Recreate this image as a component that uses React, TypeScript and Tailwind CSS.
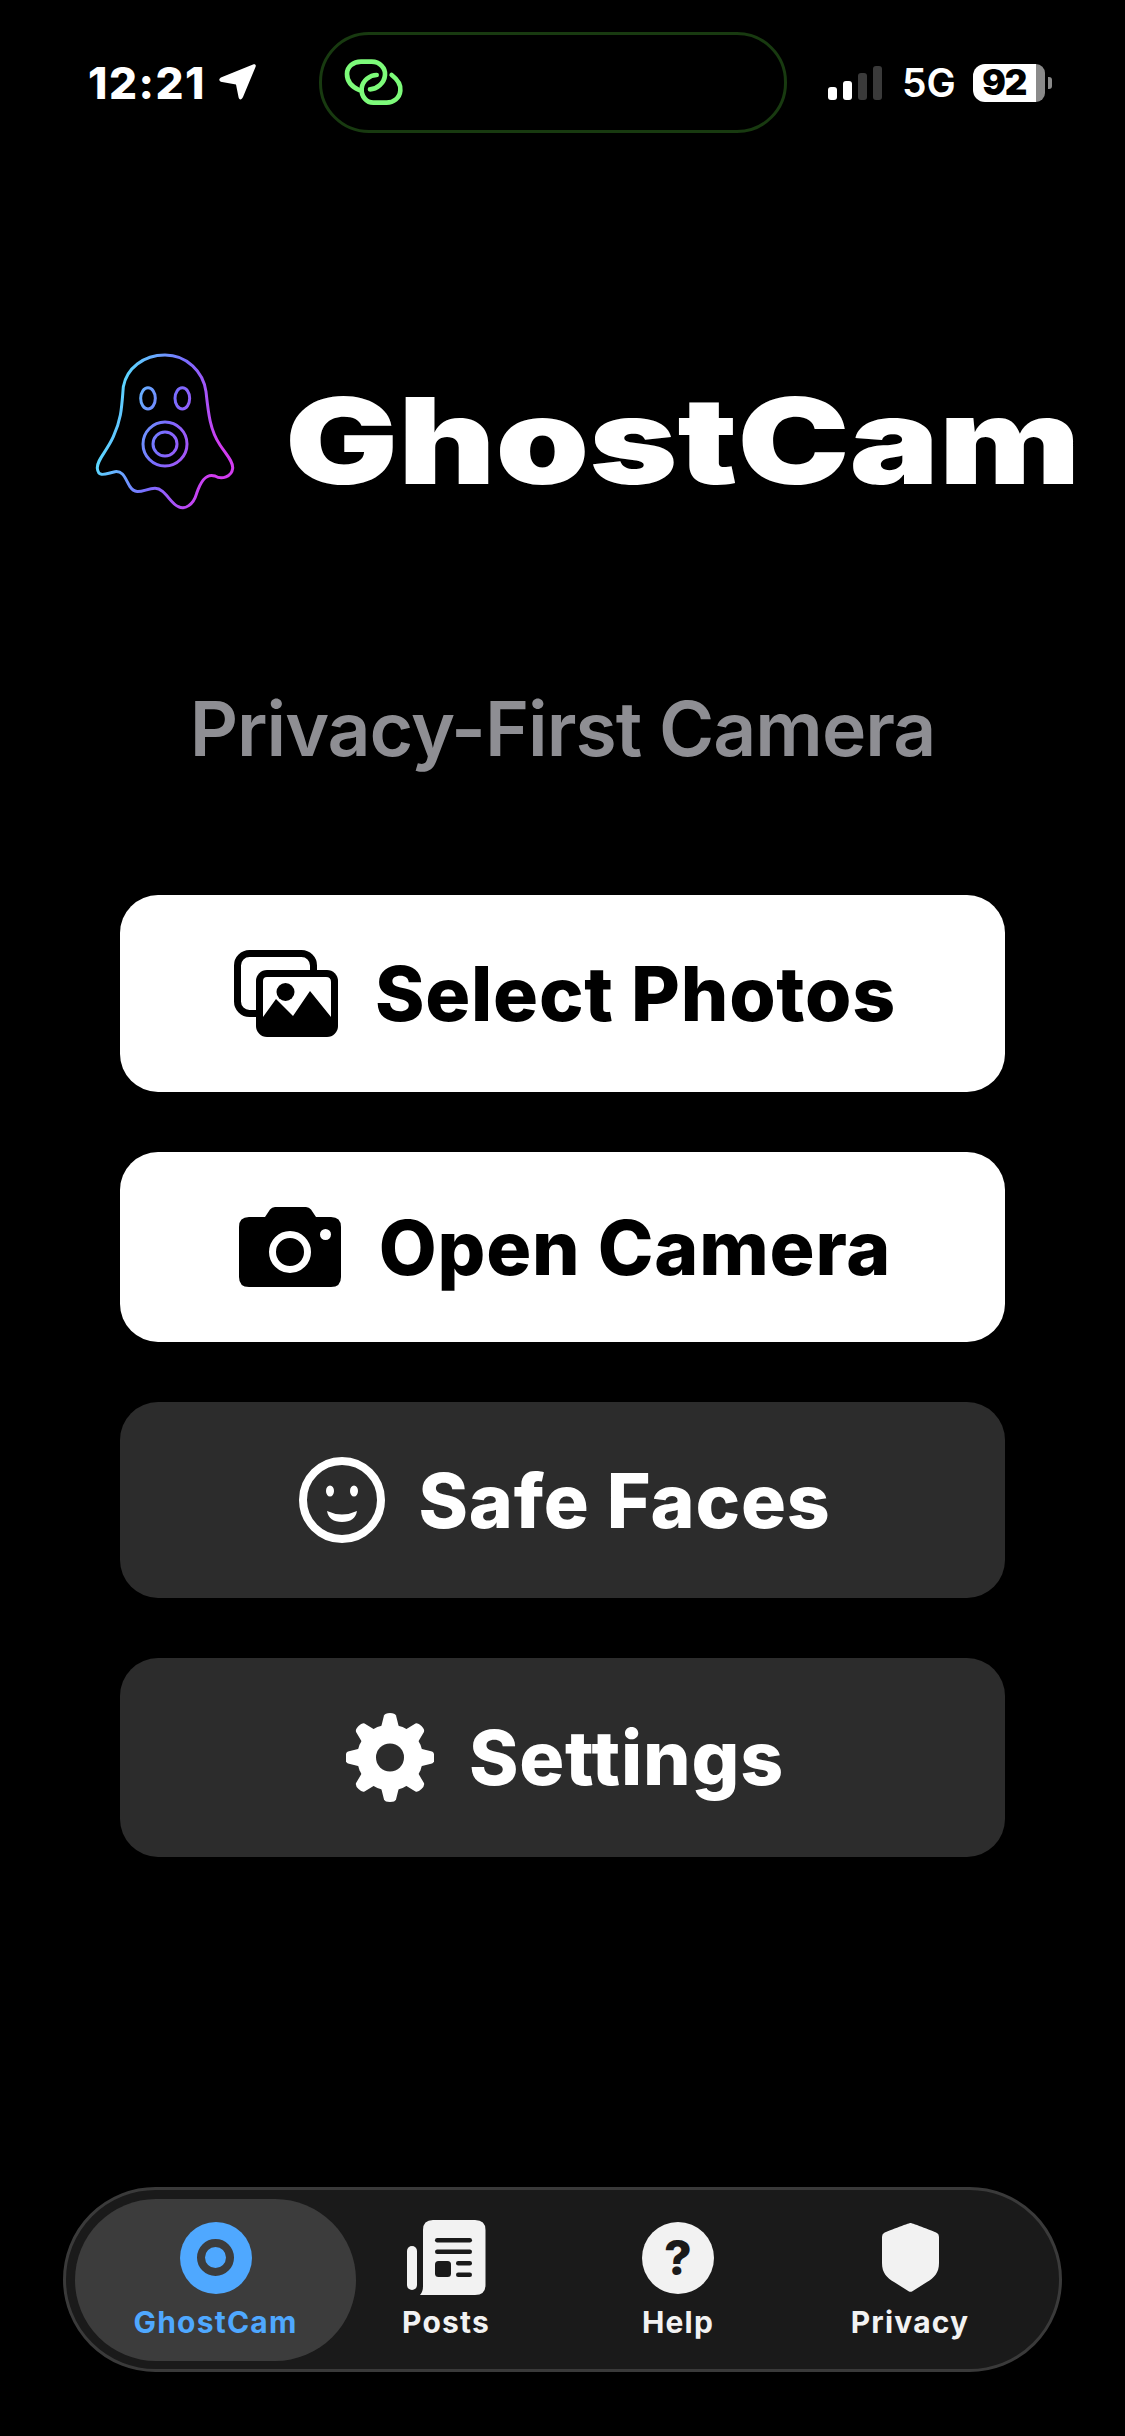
const GEAR_ANGLES = [0, 45, 90, 135, 180, 225, 270, 315];

function LinkIcon() {
  return (
    <svg className="ml-[13px] w-[75px] h-[65px]" viewBox="0 0 225 195" fill="none" stroke="#7dfb7a" strokeWidth="14" strokeLinecap="round">
      <path d="M72 120C50 110 36 95 36 72C36 50 55 35 78 35H110C135 35 152 55 150 75C148 100 125 118 105 118" />
      <path d="M170 75C190 90 198 105 196 122C194 145 175 158 155 158H115C95 158 78 140 80 115C82 92 105 75 125 75" />
    </svg>
  );
}

function StatusBar() {
  return (
    <div className="flex items-center pt-[32px]">
      <div className="w-[319px] pl-[88px] flex items-center gap-[13px]">
        <span className="text-[44px] leading-none font-extrabold text-white tracking-[1.5px]">12:21</span>
        <svg className="w-[37px] h-[37px] -mt-[2px]" viewBox="0 0 37 37">
          <path d="M34 1.500C36 .5 37.500 2 36.500 4L24 34C22.500 37.500 20 37 19.500 34L17 21.500L3 19C-.5 18.200 -.5 15.500 2.500 14.200Z" fill="white" />
        </svg>
      </div>
      <div className="w-[468px] h-[101px] rounded-[50px] border-[3px] border-[#183a10] flex items-center">
        <LinkIcon />
      </div>
      <div className="flex items-center pl-[41px]">
        <div className="flex items-end gap-[6px] h-[34px]">
          <div className="w-[9px] h-[13px] rounded-[3px] bg-white" />
          <div className="w-[9px] h-[19px] rounded-[3px] bg-white" />
          <div className="w-[9px] h-[27px] rounded-[3px] bg-[#3a3a3a]" />
          <div className="w-[9px] h-[34px] rounded-[3px] bg-[#3a3a3a]" />
        </div>
        <span className="ml-[20px] text-[39px] leading-none font-semibold text-white">5G</span>
        <div className="ml-[17px] w-[72px] h-[38px] flex">
          <div className="w-[63px] h-full rounded-l-[12px] bg-white flex items-center justify-center text-[35px] leading-none font-black tracking-[-1px] text-black">92</div>
          <div className="flex-1 rounded-r-[12px] bg-[#8a8a8a]" />
        </div>
        <div className="ml-[3px] w-[4px] h-[12px] rounded-r-[3px] bg-[#8a8a8a]" />
      </div>
    </div>
  );
}

function GhostLogo() {
  return (
    <svg className="w-[142px] h-[160px] shrink-0 -ml-[2px]" viewBox="42 36 426 480" fill="none" stroke="url(#ghostGrad)" strokeWidth="9">
      <defs>
        <linearGradient id="ghostGrad" gradientUnits="userSpaceOnUse" x1="90" y1="220" x2="420" y2="320">
          <stop offset="0" stopColor="#5adcff" />
          <stop offset="0.5" stopColor="#7a6cff" />
          <stop offset="1" stopColor="#d23cf0" />
        </linearGradient>
      </defs>
      <path d="M255 45C320 45 370 95 378 155C385 220 390 270 420 315C440 345 460 365 458 385C455 410 425 420 405 408C375 398 360 430 350 460C340 495 315 510 295 500C270 490 255 445 225 445C195 445 170 470 150 440C135 415 130 392 105 395C80 400 55 415 52 385C50 360 80 335 100 290C125 235 125 200 130 140C140 85 190 45 255 45Z" />
      <ellipse cx="204" cy="175" rx="22" ry="32" />
      <ellipse cx="307" cy="175" rx="22" ry="32" />
      <circle cx="255" cy="312" r="66" />
      <circle cx="255" cy="312" r="36" />
    </svg>
  );
}

function PhotosIcon() {
  return (
    <svg className="w-[104px] h-[87px]" viewBox="0 0 104 87">
      <rect x="3.500" y="3.500" width="76" height="60" rx="12" fill="none" stroke="black" strokeWidth="7" />
      <rect x="22" y="20" width="82" height="67" rx="11" fill="black" />
      <path d="M33 27H92Q97 27 97 32V67L76 41L59 66L42 49L29 67V31Q29 27 33 27Z" fill="white" />
      <circle cx="51.500" cy="42" r="9" fill="black" />
    </svg>
  );
}

function CameraIcon() {
  return (
    <svg className="w-[102px] h-[80px]" viewBox="0 0 102 80">
      <path d="M10 10H26L31 2.500Q33 0 36 0H67Q70 0 72 2.500L77 10H92Q102 10 102 20V70Q102 80 92 80H10Q0 80 0 70V20Q0 10 10 10Z" fill="black" />
      <circle cx="51" cy="45" r="17.500" fill="none" stroke="white" strokeWidth="7" />
      <circle cx="86.500" cy="27.500" r="5.500" fill="white" />
    </svg>
  );
}

function SmileIcon() {
  return (
    <svg className="w-[86px] h-[86px]" viewBox="0 0 86 86">
      <circle cx="43" cy="43" r="39" fill="none" stroke="white" strokeWidth="8" />
      <ellipse cx="31" cy="34" rx="4" ry="5.500" fill="white" />
      <ellipse cx="55" cy="34" rx="4" ry="5.500" fill="white" />
      <path d="M28 54Q43 61 58 54Q56 65 43 65Q30 65 28 54Z" fill="white" />
    </svg>
  );
}

function GearIcon() {
  return (
    <svg className="w-[88px] h-[89px]" viewBox="-44 -44.500 88 89">
      {GEAR_ANGLES.map((angle) => (
        <path key={angle} d="M-9 -30L-6 -42Q-5 -44.500 0 -44.500Q5 -44.500 6 -42L9 -30Z" fill="white" transform={`rotate(${angle})`} />
      ))}
      <circle r="33" fill="white" />
      <circle r="14" fill="#2c2c2c" />
    </svg>
  );
}

function PostsIcon() {
  return (
    <svg className="w-[79px] h-[75px]" viewBox="0 0 79 75">
      <rect x="0" y="26" width="10" height="44" rx="5" fill="#f2f2f2" />
      <path d="M26 0H68Q78.500 0 78.500 10V65Q78.500 75 68 75H13Q16 72 16 66V10Q16 0 26 0Z" fill="#f2f2f2" />
      <g fill="#1a1a1a">
        <rect x="28" y="18" width="37" height="4.500" rx="2.250" />
        <rect x="28" y="29.500" width="37" height="4.500" rx="2.250" />
        <rect x="28" y="41" width="16" height="16" rx="3.500" />
        <rect x="49" y="41" width="16" height="4.500" rx="2.250" />
        <rect x="49" y="52.500" width="16" height="4.500" rx="2.250" />
      </g>
    </svg>
  );
}

function ShieldIcon() {
  return (
    <svg className="w-[57px] h-[69px]" viewBox="0 0 57 69">
      <path d="M28.500 0C30 0 54 9 55 10Q57 11 57 14V40C57 50 52 55 45 59L30 68.500Q28.500 69 27 68.500L12 59C5 55 0 50 0 40V14Q0 11 2 10C3 9 27 0 28.500 0Z" fill="#f2f2f2" />
    </svg>
  );
}

function MenuButton({ icon, label, height, gap, light }: { icon: React.ReactNode; label: string; height: string; gap: string; light?: boolean }) {
  return (
    <button className={`${height} ${gap} ${light ? "bg-white text-black" : "bg-[#2c2c2c] text-white"} w-full rounded-[38px] flex items-center justify-center pl-[5px] text-[75px] leading-none font-[850] tracking-[0.8px]`}>
      {icon}
      <span>{label}</span>
    </button>
  );
}

function NavItem({ icon, label, active }: { icon: React.ReactNode; label: string; active?: boolean }) {
  return (
    <div className={`flex flex-col items-center ${active ? "w-[281px] h-[162px] rounded-[81px] bg-[#3c3c3c] text-[#4fa8ff]" : "w-[178px] h-[162px] text-[#f2f2f2]"}`}>
      <div className="h-[72px] mt-[23px] flex items-center justify-center">{icon}</div>
      <span className="mt-[10px] text-[30px] leading-[36px] font-bold tracking-[1.2px]">{label}</span>
    </div>
  );
}

function BottomNav() {
  return (
    <div className="mt-[330px] mx-[63px] h-[185px] rounded-full bg-[#1a1a1a] border-[3px] border-[#3a3a3a] pl-[9px] flex items-center">
      <NavItem
        active
        label="GhostCam"
        icon={
          <div className="w-[72px] h-[72px] rounded-full bg-[#4fa8ff] flex items-center justify-center">
            <div className="w-[37px] h-[37px] rounded-full border-[8px] border-[#3c3c3c]" />
          </div>
        }
      />
      <div className="ml-[1px] flex gap-[54px]">
        <NavItem label="Posts" icon={<PostsIcon />} />
        <NavItem
          label="Help"
          icon={
            <div className="w-[72px] h-[72px] rounded-full bg-[#f2f2f2] flex items-center justify-center text-[48px] leading-none font-extrabold text-[#1a1a1a]">?</div>
          }
        />
        <NavItem label="Privacy" icon={<ShieldIcon />} />
      </div>
    </div>
  );
}

export default function App() {
  return (
    <div className="w-[1125px] h-[2436px] bg-black overflow-hidden font-[Inter,sans-serif]">
      <StatusBar />
      <div className="mt-[219px] pl-[96px] flex items-center gap-[49px]">
        <GhostLogo />
        <span className="mt-[17px] inline-block origin-left scale-x-[1.25] text-[120px] leading-none font-black text-white">GhostCam</span>
      </div>
      <div className="mt-[171px] h-[90px] flex items-center justify-center text-[75px] font-semibold leading-none text-[#8e8e93] tracking-[-1px]">
        Privacy-First Camera
      </div>
      <div className="mt-[122px] px-[120px] flex flex-col gap-[60px]">
        <MenuButton light label="Select Photos" height="h-[197px]" gap="gap-[37px]" icon={<PhotosIcon />} />
        <MenuButton light label="Open Camera" height="h-[190px]" gap="gap-[38px]" icon={<CameraIcon />} />
        <MenuButton label="Safe Faces" height="h-[196px]" gap="gap-[33px]" icon={<SmileIcon />} />
        <MenuButton label="Settings" height="h-[199px]" gap="gap-[35px]" icon={<GearIcon />} />
      </div>
      <BottomNav />
    </div>
  );
}
